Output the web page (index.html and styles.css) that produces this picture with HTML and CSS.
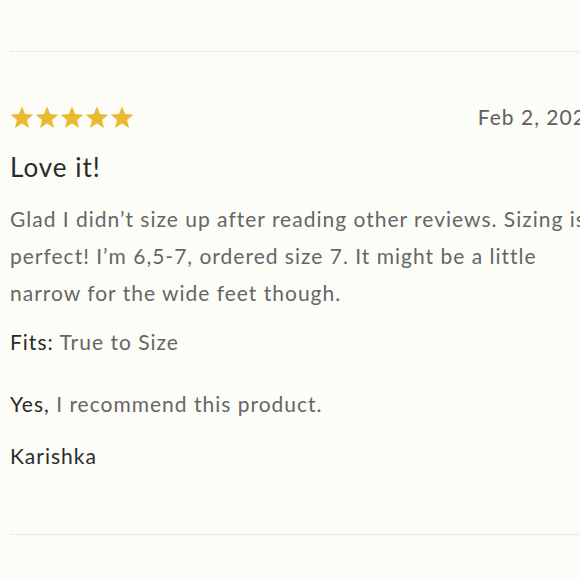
FILE: index.html
```html
<!DOCTYPE html>
<html lang="en">
<head>
<meta charset="utf-8">
<link rel="stylesheet" href="styles.css">
</head>
<body>
<div class="page">
  <article class="review">
    <div class="review-head">
      <div class="stars" aria-label="5 stars">
        <svg class="star" viewBox="0 0 24 24"><path d="M12 1.5l3.1 7.6 8.2.6-6.3 5.3 2 8-7-4.4-7 4.4 2-8L.7 9.7l8.2-.6z"/></svg>
        <svg class="star" viewBox="0 0 24 24"><path d="M12 1.5l3.1 7.6 8.2.6-6.3 5.3 2 8-7-4.4-7 4.4 2-8L.7 9.7l8.2-.6z"/></svg>
        <svg class="star" viewBox="0 0 24 24"><path d="M12 1.5l3.1 7.6 8.2.6-6.3 5.3 2 8-7-4.4-7 4.4 2-8L.7 9.7l8.2-.6z"/></svg>
        <svg class="star" viewBox="0 0 24 24"><path d="M12 1.5l3.1 7.6 8.2.6-6.3 5.3 2 8-7-4.4-7 4.4 2-8L.7 9.7l8.2-.6z"/></svg>
        <svg class="star" viewBox="0 0 24 24"><path d="M12 1.5l3.1 7.6 8.2.6-6.3 5.3 2 8-7-4.4-7 4.4 2-8L.7 9.7l8.2-.6z"/></svg>
      </div>
      <span class="date">Feb 2, 2023</span>
    </div>
    <h3 class="title">Love it!</h3>
    <p class="body">Glad I didn’t size up after reading other reviews. Sizing is<br>perfect! I’m 6,5-7, ordered size 7. It might be a little<br>narrow for the wide feet though.</p>
    <p class="meta fits"><span class="label">Fits:</span> True to Size</p>
    <p class="meta recommend"><span class="label">Yes,</span> I recommend this product.</p>
    <p class="meta author">Karishka</p>
  </article>
</div>
</body>
</html>
```
FILE: styles.css
```css
html, body {
  margin: 0;
  padding: 0;
  background: #fdfdf8;
}
body {
  font-family: Lato, "Noto Sans", sans-serif;
  color: #666;
  overflow: hidden;
}
.page {
  width: 589px;
  padding: 51px 0 0 10px;
}
.review {
  border-top: 1px dotted #d8d8d2;
  border-bottom: 1px dotted #d8d8d2;
  padding: 53px 0 63px 0;
}
.review-head {
  display: flex;
  justify-content: space-between;
  align-items: center;
  height: 24px;
}
.stars {
  display: flex;
  gap: 1px;
}
.star {
  width: 24px;
  height: 24px;
  fill: #e8b931;
}
.date {
  font-size: 21px;
  line-height: 24px;
  letter-spacing: 1px;
  color: #5f5f5f;
  white-space: nowrap;
}
.title {
  margin: 22px 0 0;
  font-size: 26px;
  line-height: 32px;
  font-weight: 400;
  letter-spacing: 1px;
  color: #2a2a2a;
}
.body {
  margin: 17px 0 0;
  font-size: 21px;
  line-height: 37px;
  letter-spacing: 1px;
  color: #666;
  white-space: nowrap;
}
.meta {
  font-size: 21px;
  line-height: 30px;
  letter-spacing: 1px;
  margin: 0;
}
.fits { margin-top: 16px; }
.recommend { margin-top: 32px; }
.author { margin-top: 22px; color: #2a2a2a; }
.label { color: #2a2a2a; }
```
